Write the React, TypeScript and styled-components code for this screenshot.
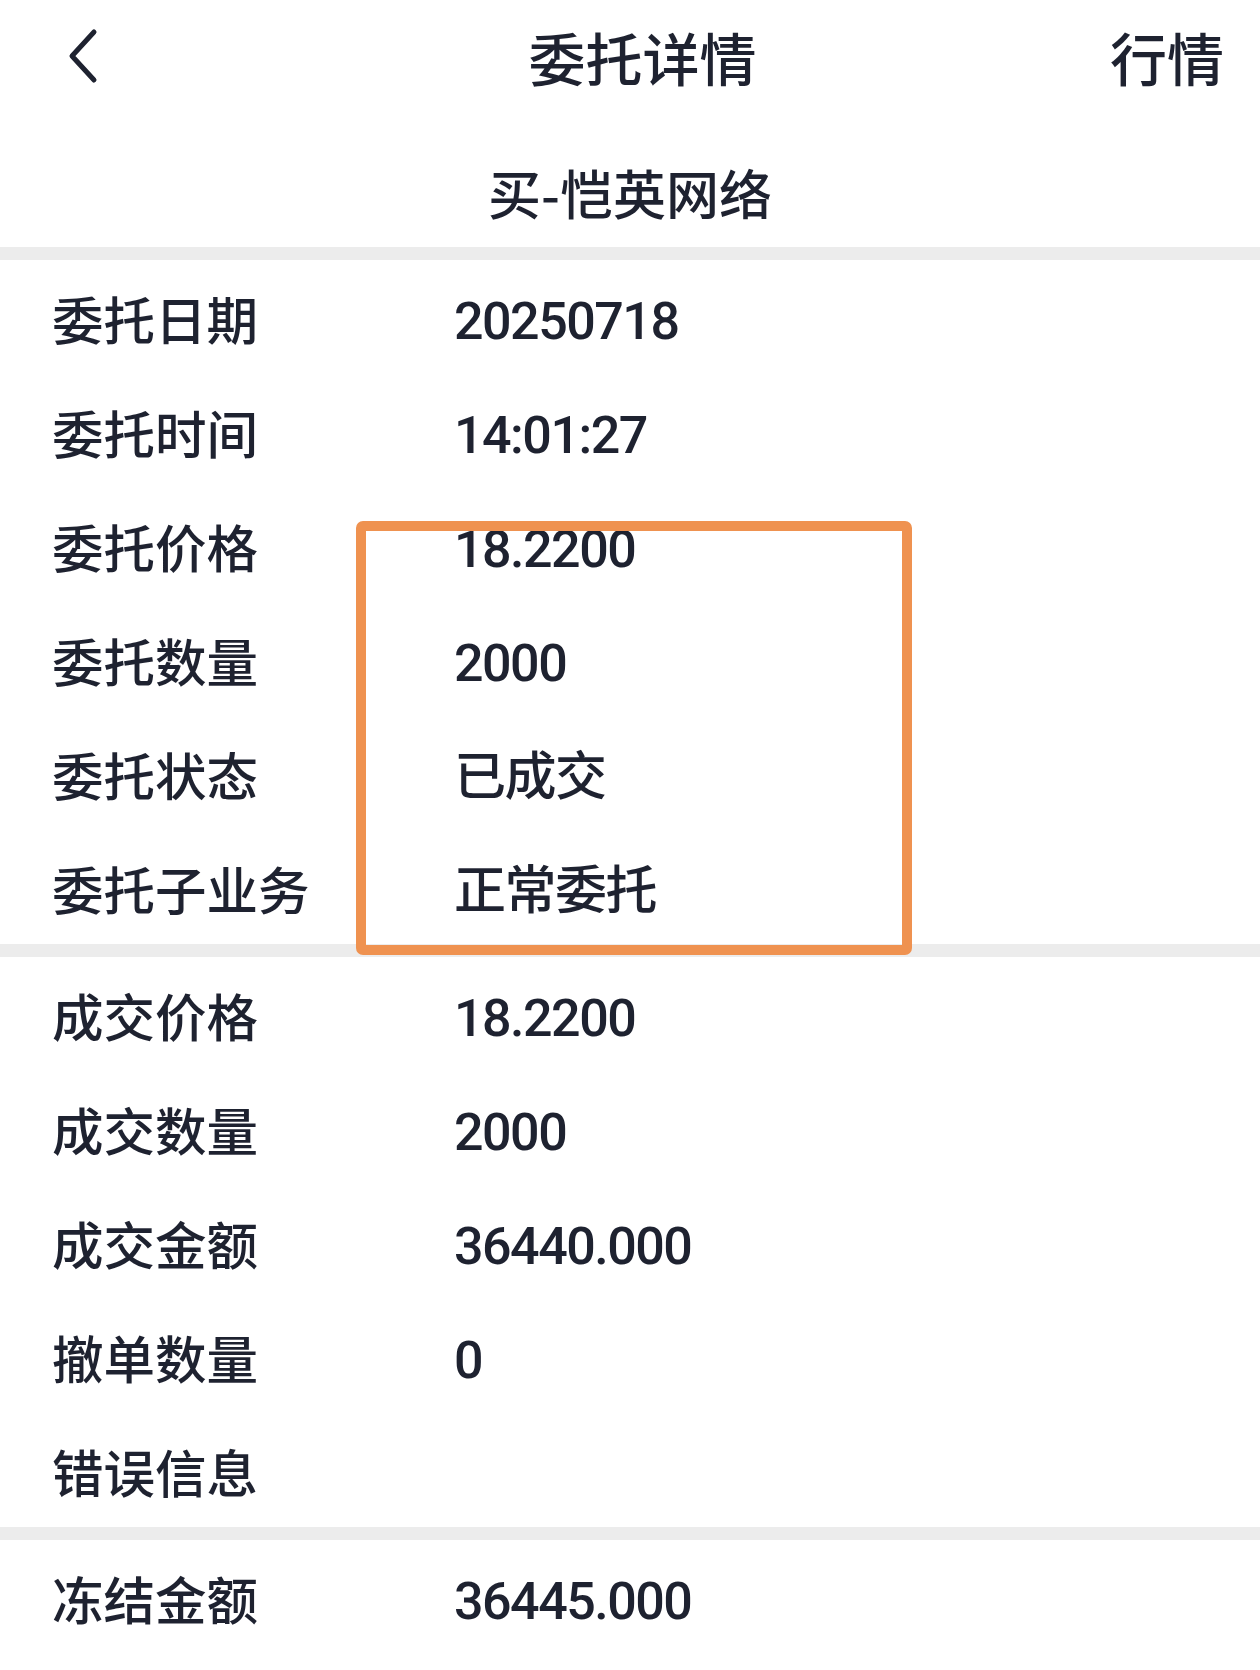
import React from "react";
import styled, {createGlobalStyle} from "styled-components";

const GlobalStyle = createGlobalStyle`
  html, body {
    margin: 0;
    padding: 0;
    background: #fff;
  }
  body {
    font-family: "Noto Sans CJK SC", "Noto Sans", sans-serif;
    color: #1e2230;
  }
`;

type Row = {label: string; value?: string};

const orderRows: Row[] = [
    {label: "委托日期", value: "20250718"},
    {label: "委托时间", value: "14:01:27"},
    {label: "委托价格", value: "18.2200"},
    {label: "委托数量", value: "2000"},
    {label: "委托状态", value: "已成交"},
    {label: "委托子业务", value: "正常委托"},
];

const dealRows: Row[] = [
    {label: "成交价格", value: "18.2200"},
    {label: "成交数量", value: "2000"},
    {label: "成交金额", value: "36440.000"},
    {label: "撤单数量", value: "0"},
    {label: "错误信息"},
];

const frozenRows: Row[] = [
    {label: "冻结金额", value: "36445.000"},
];

const BackIcon = () => (
    <svg width="40" height="60" viewBox="0 0 40 60" fill="none">
        <path d="M30 6 L8 30 L30 54" stroke="#1e2230" strokeWidth="5" strokeLinecap="round" strokeLinejoin="round"/>
    </svg>
);

const DetailSection = ({rows}: {rows: Row[]}) => (
    <Section>
        {rows.map(r => (
            <InfoRow key={r.label}>
                <Label>{r.label}</Label>
                <Value>{r.value}</Value>
            </InfoRow>
        ))}
    </Section>
);

const App = () => {
    return (
        <Page>
            <GlobalStyle/>
            <NavBar>
                <BackButton><BackIcon/></BackButton>
                <Title>委托详情</Title>
                <NavAction>行情</NavAction>
            </NavBar>
            <StockName>买-恺英网络</StockName>
            <Divider/>
            <DetailSection rows={orderRows}/>
            <Divider/>
            <DetailSection rows={dealRows}/>
            <Divider/>
            <DetailSection rows={frozenRows}/>
            <Highlight/>
        </Page>
    );
};

const Page = styled.div`
  position: relative;
  width: 1260px;
  min-height: 1670px;
  background: #fff;
  overflow: hidden;
`;

const NavBar = styled.div`
  display: grid;
  grid-template-columns: 200px 1fr 175px;
  align-items: center;
  height: 112px;
`;

const BackButton = styled.div`
  display: flex;
  align-items: center;
  padding-left: 64px;
`;

const Title = styled.div`
  text-align: center;
  font-size: 57px;
  font-weight: 500;
  line-height: 1;
`;

const NavAction = styled.div`
  text-align: right;
  padding-right: 36px;
  font-size: 57px;
  font-weight: 500;
  line-height: 1;
`;

const StockName = styled.div`
  display: flex;
  align-items: center;
  justify-content: center;
  height: 135px;
  padding-top: 26px;
  box-sizing: border-box;
  font-size: 53px;
  font-weight: 500;
  line-height: 1;
`;

const Divider = styled.div`
  height: 13px;
  background: #ececec;
`;

const Section = styled.div`
  display: flex;
  flex-direction: column;
`;

const InfoRow = styled.div`
  display: flex;
  align-items: center;
  height: 114px;
  padding: 6px 0 0 52px;
  box-sizing: border-box;
`;

const Label = styled.div`
  width: 402px;
  padding-bottom: 4px;
  font-size: 51.5px;
  font-weight: 500;
  line-height: 1;
`;

const Value = styled.div`
  padding-top: 4px;
  font-family: "Roboto", "Noto Sans CJK SC", sans-serif;
  font-size: 52px;
  font-weight: 500;
  letter-spacing: -1.5px;
  line-height: 1;
`;

const Highlight = styled.div`
  position: absolute;
  left: 356px;
  top: 521px;
  width: 556px;
  height: 434px;
  box-sizing: border-box;
  border: 10px solid #ef9250;
  border-radius: 7px;
  pointer-events: none;
`;

export default App;
